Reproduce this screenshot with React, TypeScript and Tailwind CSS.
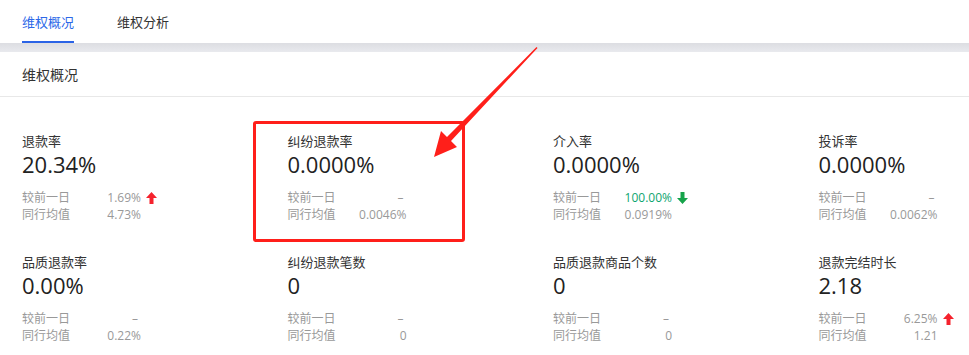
import React from "react";

type Metric = {
  title: string;
  value: string;
  day: string;
  avg: string;
  trend?: "up" | "down";
};

const row1: Metric[] = [
  { title: "退款率", value: "20.34%", day: "1.69%", avg: "4.73%", trend: "up" },
  { title: "纠纷退款率", value: "0.0000%", day: "–", avg: "0.0046%" },
  { title: "介入率", value: "0.0000%", day: "100.00%", avg: "0.0919%", trend: "down" },
  { title: "投诉率", value: "0.0000%", day: "–", avg: "0.0062%" },
];

const row2: Metric[] = [
  { title: "品质退款率", value: "0.00%", day: "–", avg: "0.22%" },
  { title: "纠纷退款笔数", value: "0", day: "–", avg: "0" },
  { title: "品质退款商品个数", value: "0", day: "–", avg: "0" },
  { title: "退款完结时长", value: "2.18", day: "6.25%", avg: "1.21", trend: "up" },
];

function UpArrow() {
  return (
    <svg width="11" height="12" viewBox="0 0 11 12" className="ml-[5px]">
      <polygon points="5.5,0 11,6 7.5,6 7.5,12 3.5,12 3.5,6 0,6" fill="#f5222d" />
    </svg>
  );
}

function DownArrow() {
  return (
    <svg width="11" height="12" viewBox="0 0 11 12" className="ml-[5px]">
      <polygon points="3.5,0 7.5,0 7.5,6 11,6 5.5,12 0,6 3.5,6" fill="#16a34a" />
    </svg>
  );
}

function Card({ m }: { m: Metric }) {
  const dash = m.day === "–";
  return (
    <div className="flex flex-col">
      <div className="text-[13px] leading-[17px] text-[#333]">{m.title}</div>
      <div className="text-[22px] leading-[28px] text-[#222]">{m.value}</div>
      <div className="mt-[11px] text-[12px] leading-[17px] text-[#999]">
        <div className="flex items-center">
          <div className="flex w-[119px] justify-between">
            <span>较前一日</span>
            <span className={m.trend === "down" ? "text-[#0ea56f]" : dash ? "pr-[3px]" : ""}>{m.day}</span>
          </div>
          {m.trend === "up" && <UpArrow />}
          {m.trend === "down" && <DownArrow />}
        </div>
        <div className="flex w-[119px] justify-between">
          <span>同行均值</span>
          <span>{m.avg}</span>
        </div>
      </div>
    </div>
  );
}

export default function App() {
  return (
    <div
      className="relative h-[355px] w-[969px] overflow-hidden bg-white"
      style={{ fontFamily: '"Open Sans", "Noto Sans CJK SC", sans-serif' }}
    >
      {/* tabs */}
      <div className="flex h-[43px] items-stretch pl-[22px] text-[13px]">
        <div className="flex flex-col justify-between">
          <div className="pt-[12px] leading-[20px] text-[#2c68e8]">维权概况</div>
          <div className="h-[2px] bg-[#2a63e6]" />
        </div>
        <div className="ml-[43px] pt-[12px] leading-[20px] text-[#333]">维权分析</div>
      </div>
      <div className="h-[9px] bg-gradient-to-b from-[#dcdde2] to-[#e9eaee]" />

      {/* section header */}
      <div className="flex h-[45px] items-center border-b border-[#e8e8e8] pl-[22px] text-[14px] text-[#333]">
        维权概况
      </div>

      {/* metrics */}
      <div className="grid grid-cols-[265.5px_265.5px_265.5px_265.5px] gap-y-[31px] pl-[22px] pt-[36px]">
        {row1.map((m) => (
          <Card key={m.title} m={m} />
        ))}
        {row2.map((m) => (
          <Card key={m.title} m={m} />
        ))}
      </div>

      {/* annotation */}
      <div className="absolute left-[253px] top-[121px] h-[121px] w-[212px] rounded-[3px] border-[3px] border-[#ff1f1a]" />
      <svg className="absolute left-0 top-0" width="969" height="355" viewBox="0 0 969 355">
        <polygon
          points="537.5,48 451,141 457,147 434,157 441,131 447,137 536.5,47"
          fill="#ff1f1a"
        />
      </svg>
    </div>
  );
}
